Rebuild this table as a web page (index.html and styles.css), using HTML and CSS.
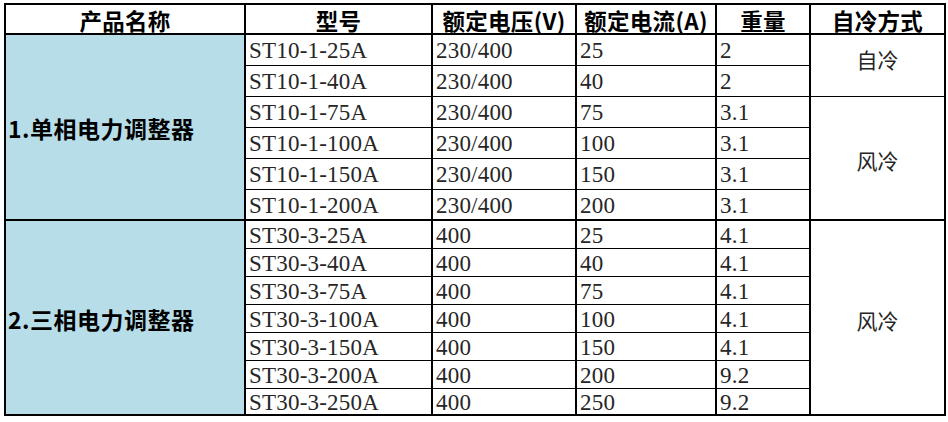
FILE: index.html
```html
<!DOCTYPE html>
<html lang="zh">
<head>
<meta charset="utf-8">
<title>产品规格表</title>
<link rel="stylesheet" href="styles.css">
</head>
<body>
<div class="sheet">
  <div class="hd">产品名称</div>
  <div class="hd">型号</div>
  <div class="hd">额定电压(V)</div>
  <div class="hd">额定电流(A)</div>
  <div class="hd">重量</div>
  <div class="hd">自冷方式</div>

  <div class="sec sec1">
    <div class="label span6 end">1.单相电力调整器</div>
    <div class="c">ST10-1-25A</div><div class="c">230/400</div><div class="c">25</div><div class="c">2</div>
    <div class="cool span2 top">自冷</div>
    <div class="c">ST10-1-40A</div><div class="c">230/400</div><div class="c">40</div><div class="c">2</div>
    <div class="c">ST10-1-75A</div><div class="c">230/400</div><div class="c">75</div><div class="c">3.1</div>
    <div class="cool span4 end">风冷</div>
    <div class="c">ST10-1-100A</div><div class="c">230/400</div><div class="c">100</div><div class="c">3.1</div>
    <div class="c">ST10-1-150A</div><div class="c">230/400</div><div class="c">150</div><div class="c">3.1</div>
    <div class="c end">ST10-1-200A</div><div class="c end">230/400</div><div class="c end">200</div><div class="c end">3.1</div>
  </div>

  <div class="sec sec2">
    <div class="label span7 end">2.三相电力调整器</div>
    <div class="c">ST30-3-25A</div><div class="c">400</div><div class="c">25</div><div class="c">4.1</div>
    <div class="cool span7 end">风冷</div>
    <div class="c">ST30-3-40A</div><div class="c">400</div><div class="c">40</div><div class="c">4.1</div>
    <div class="c">ST30-3-75A</div><div class="c">400</div><div class="c">75</div><div class="c">4.1</div>
    <div class="c">ST30-3-100A</div><div class="c">400</div><div class="c">100</div><div class="c">4.1</div>
    <div class="c">ST30-3-150A</div><div class="c">400</div><div class="c">150</div><div class="c">4.1</div>
    <div class="c">ST30-3-200A</div><div class="c">400</div><div class="c">200</div><div class="c">9.2</div>
    <div class="c end">ST30-3-250A</div><div class="c end">400</div><div class="c end">250</div><div class="c end">9.2</div>
  </div>
</div>
</body>
</html>
```
FILE: styles.css
```css
* { box-sizing: border-box; }

html, body {
  margin: 0;
  background: #fff;
}

body {
  padding: 3px 0 0 4px;
}

.sheet {
  display: grid;
  width: 942px;
  grid-template-columns: 240px 187px 144px 140px 94px 135px;
  grid-template-rows: 30px repeat(6, 31px) repeat(6, 28px) 27px;
  border-left: 2px solid #000;
  border-top: 2px solid #000;
}

.sec { display: contents; }

.hd, .c, .label, .cool {
  border-right: 2px solid #000;
  border-bottom: 1px solid #000;
  display: flex;
  align-items: center;
  overflow: hidden;
  white-space: nowrap;
}

.hd {
  border-bottom-width: 2px;
  justify-content: center;
  padding-top: 2px;
  font-family: "Noto Sans CJK SC", sans-serif;
  font-weight: 700;
  font-size: 22.5px;
  line-height: 26px;
  letter-spacing: 0.3px;
  color: #000;
}

.c {
  padding-left: 3px;
  padding-top: 1px;
  font-family: "Liberation Serif", "Noto Sans CJK SC", serif;
  font-size: 23px;
  line-height: 23px;
  letter-spacing: 0.2px;
  color: #262626;
}

.label {
  background: #b7dde8;
  padding-left: 2px;
  padding-top: 2px;
  font-family: "Noto Sans CJK SC", sans-serif;
  font-weight: 700;
  font-size: 23px;
  line-height: 26px;
  letter-spacing: 0.5px;
  color: #000;
}

.cool {
  justify-content: center;
  font-family: "Noto Sans CJK SC", sans-serif;
  font-weight: 400;
  font-size: 21px;
  line-height: 24px;
  color: #262626;
  padding-top: 4px;
}

.cool.top {
  align-items: flex-start;
  padding-top: 12px;
}

.end { border-bottom-width: 2px; }

.span2 { grid-row: span 2; }
.span4 { grid-row: span 4; }
.span6 { grid-row: span 6; }
.span7 { grid-row: span 7; }
```
